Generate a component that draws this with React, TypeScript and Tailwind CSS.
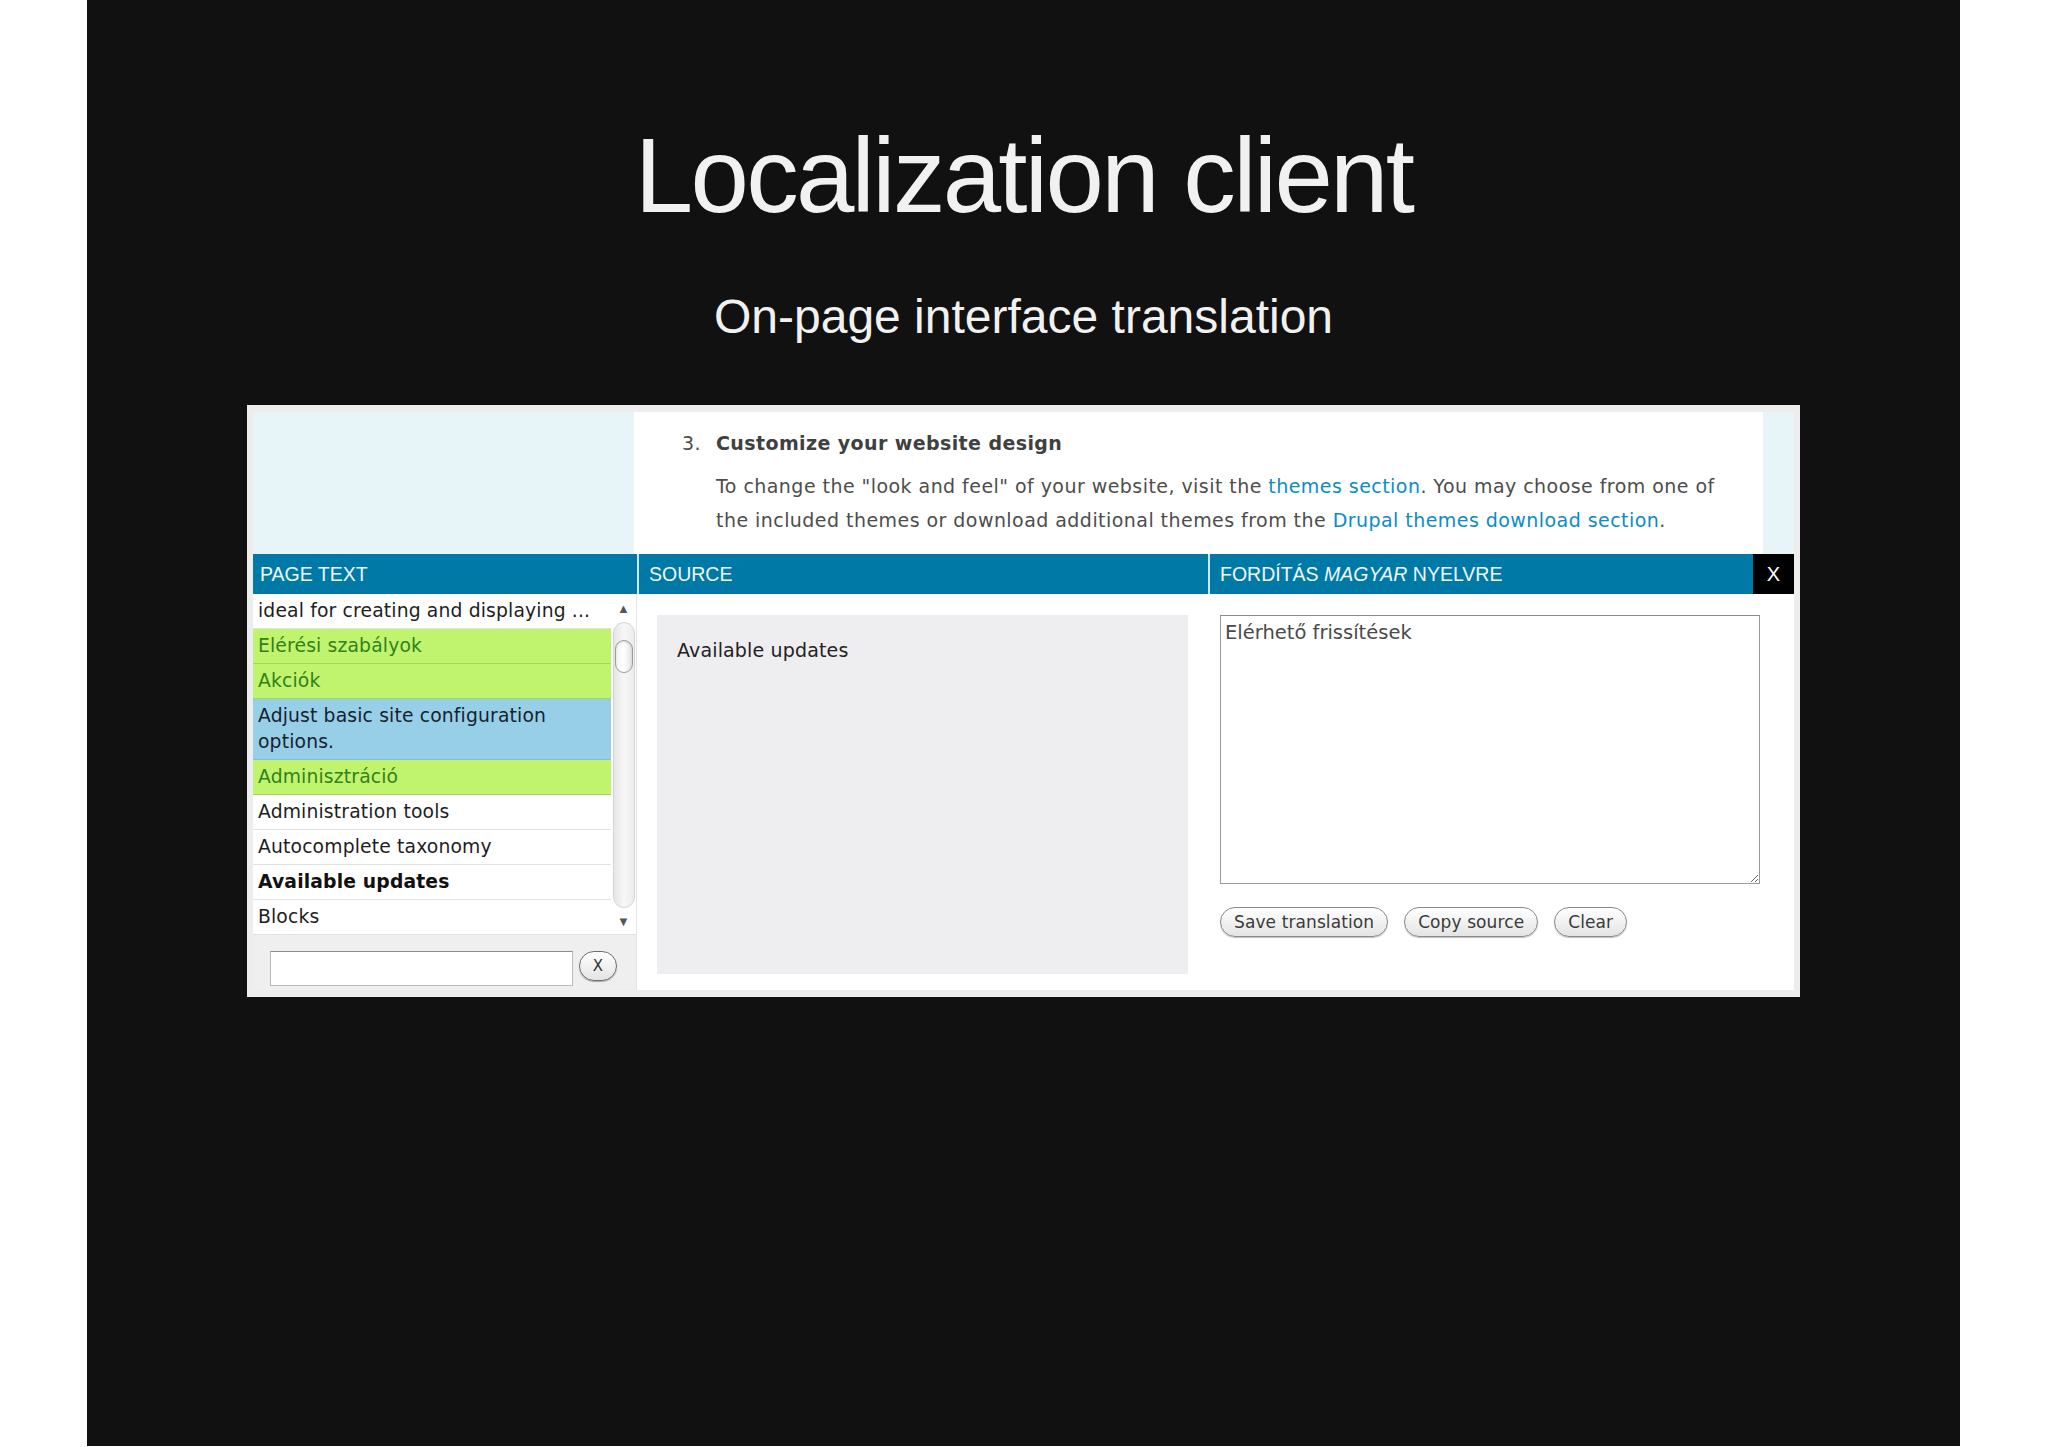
import React from "react";

const sans = "font-['Liberation_Sans',Arial,sans-serif]";
const verdana = "font-['DejaVu_Sans',Verdana,sans-serif]";

type Row = {
  text: React.ReactNode;
  kind: "plain" | "green" | "blue" | "bold";
};

const rows: Row[] = [
  { text: "ideal for creating and displaying ...", kind: "plain" },
  { text: "Elérési szabályok", kind: "green" },
  { text: "Akciók", kind: "green" },
  {
    text: (
      <>
        Adjust basic site configuration
        <br />
        options.
      </>
    ),
    kind: "blue",
  },
  { text: "Adminisztráció", kind: "green" },
  { text: "Administration tools", kind: "plain" },
  { text: "Autocomplete taxonomy", kind: "plain" },
  { text: "Available updates", kind: "bold" },
  { text: "Blocks", kind: "plain" },
];

const rowClass: Record<Row["kind"], string> = {
  plain: "bg-white text-[#1e1e1e] border-[#e2e2e2]",
  bold: "bg-white text-[#111] font-bold border-[#e2e2e2]",
  green: "bg-[#c0f46e] text-[#32821a] border-[#a3d75a]",
  blue: "bg-[#98cfe8] text-[#15232e] border-[#86bcd6]",
};

function Scrollbar() {
  return (
    <div className="flex w-[25px] flex-col items-center bg-white border-b border-[#e2e2e2]">
      <div className="flex h-[28px] items-center justify-center text-[13px] leading-none text-[#555]">
        ▲
      </div>
      <div className="flex w-[22px] flex-1 flex-col rounded-full border border-[#d4d4d4] bg-gradient-to-r from-[#e6e6e6] via-[#f7f7f7] to-[#ececec] px-[1px]">
        <div className="mt-[17px] h-[33px] rounded-full border border-[#9c9c9c] bg-gradient-to-r from-[#f4f4f4] via-white to-[#e2e2e2] shadow-[inset_0_1px_2px_rgba(0,0,0,0.15)]" />
      </div>
      <div className="flex h-[26px] items-center justify-center text-[13px] leading-none text-[#555]">
        ▼
      </div>
    </div>
  );
}

function PageTextColumn() {
  return (
    <div className="flex w-[384px] flex-col border-r border-[#e4e4e4] bg-[#efefef]">
      <div className="flex">
        <div
          className={`flex w-[358px] flex-col ${verdana} text-[18.75px] leading-[26px] tracking-[0.15px]`}
        >
          {rows.map((row, i) => (
            <div
              key={i}
              className={`whitespace-nowrap border-b px-[5px] py-[4px] ${rowClass[row.kind]}`}
            >
              {row.text}
            </div>
          ))}
        </div>
        <Scrollbar />
      </div>
      <div className="flex flex-1 items-start pl-[17px] pt-[16px]">
        <div className="h-[35px] w-[303px] border border-[#b9b9b9] border-t-[#8c8c8c] bg-white" />
        <button
          type="button"
          className={`ml-[6px] flex h-[30px] w-[38px] items-center justify-center rounded-full border border-[#6f6f6f] bg-gradient-to-b from-white to-[#e4e4e4] text-[15px] leading-none text-[#333] shadow-[0_1px_1px_rgba(0,0,0,0.3)] ${verdana}`}
        >
          X
        </button>
      </div>
    </div>
  );
}

function SourceColumn() {
  return (
    <div className="ml-[2px] flex w-[569px] flex-col bg-white pb-[16px] pl-[18px] pr-[20px] pt-[21px]">
      <div
        className={`flex-1 bg-[#eeeef0] pl-[20px] pt-[22px] text-[19px] leading-[26px] tracking-[0.15px] text-[#222] ${verdana}`}
      >
        Available updates
      </div>
    </div>
  );
}

function TranslationColumn() {
  const buttons = ["Save translation", "Copy source", "Clear"];
  return (
    <div className="flex w-[584px] flex-col bg-white pl-[12px] pt-[21px]">
      <textarea
        readOnly
        defaultValue="Elérhető frissítések"
        className={`h-[269px] w-[540px] border border-[#999] border-t-[#8a8a8a] bg-white px-[4px] pt-[4px] text-[19.5px] leading-[26px] text-[#4a4a4a] outline-none ${verdana}`}
      />
      <div className="mt-[23px] flex gap-[16px]">
        {buttons.map((label) => (
          <button
            key={label}
            type="button"
            className={`h-[30px] rounded-full border border-[#8a8a8a] bg-gradient-to-b from-white to-[#e4e4e4] px-[13px] text-[17px] leading-none tracking-[0.1px] text-[#3a3a3a] shadow-[0_1px_1px_rgba(0,0,0,0.25)] ${verdana}`}
          >
            {label}
          </button>
        ))}
      </div>
    </div>
  );
}

function Panel() {
  return (
    <div className="mt-[64px] w-[1553px] bg-[#ededed] px-[6px] pb-[7px] pt-[7px]">
      {/* site page peeking above the client */}
      <div className="flex h-[142px]">
        <div className="w-[381px] bg-[#e7f5f8]" />
        <div
          className={`w-[1129px] bg-white pl-[48px] pt-[14px] ${verdana} text-[19px] leading-[34px] tracking-[0.45px] text-[#4d4d4d]`}
        >
          <div className="flex">
            <span className="w-[34px]">3.</span>
            <span className="font-bold tracking-[0.4px] text-[#404040]">
              Customize your website design
            </span>
          </div>
          <p className="ml-[34px] mt-[9px] whitespace-nowrap">
            To change the "look and feel" of your website, visit the{" "}
            <span className="text-[#0a8cc6]">themes section</span>. You may choose from one of
            <br />
            the included themes or download additional themes from the{" "}
            <span className="text-[#0a8cc6]">Drupal themes download section</span>.
          </p>
        </div>
        <div className="w-[31px] bg-[#e7f5f8]" />
      </div>

      {/* header bar */}
      <div className={`flex h-[40px] bg-[#cbe9f1] text-[19.5px] leading-[40px] text-[#eef8fb] ${sans}`}>
        <div className="w-[384px] bg-[#0079a6] pl-[7px]">PAGE TEXT</div>
        <div className="ml-[2px] w-[569px] bg-[#0079a6] pl-[10px]">SOURCE</div>
        <div className="ml-[2px] w-[543px] bg-[#0079a6] pl-[10px]">
          FORDÍTÁS <span className="italic">MAGYAR</span> NYELVRE
        </div>
        <div className="flex w-[41px] items-center justify-center bg-black text-[20px] text-white">
          X
        </div>
      </div>

      {/* body */}
      <div className="flex h-[396px] bg-white">
        <PageTextColumn />
        <SourceColumn />
        <TranslationColumn />
      </div>
    </div>
  );
}

export default function App() {
  return (
    <div className="h-[1447px] w-[2048px] bg-white">
      <div className="ml-[87px] flex h-[1446px] w-[1873px] flex-col items-center bg-[#111111]">
        <h1
          className={`mt-[123px] text-[105px] font-normal leading-none tracking-[-2.7px] text-[#f1f1f1] ${sans}`}
        >
          Localization client
        </h1>
        <p className={`mt-[65px] text-[48px] leading-none text-[#f1f1f1] ${sans}`}>
          On-page interface translation
        </p>
        <Panel />
      </div>
    </div>
  );
}
